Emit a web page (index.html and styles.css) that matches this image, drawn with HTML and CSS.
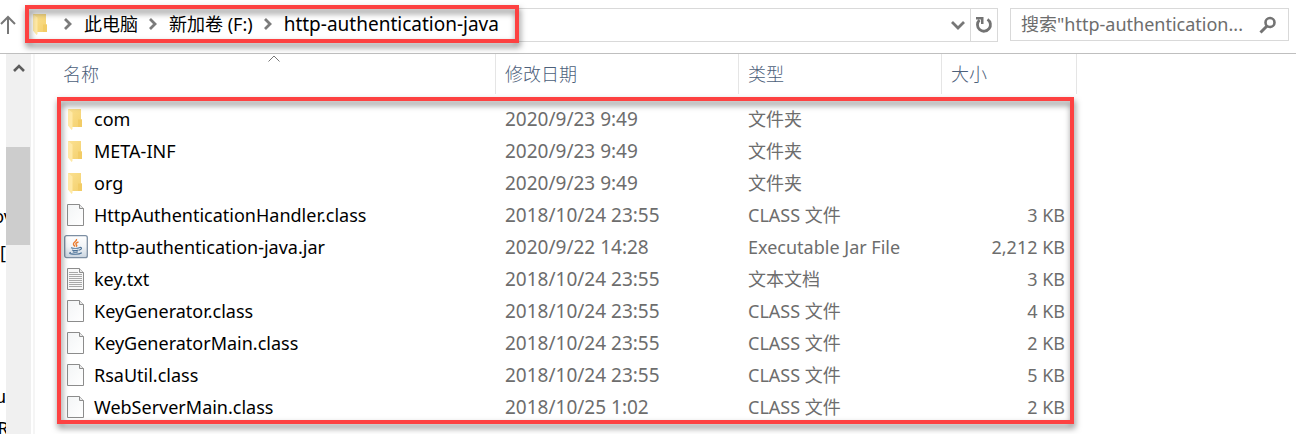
FILE: index.html
```html
<!DOCTYPE html>
<html lang="zh-CN">
<head>
    <meta charset="UTF-8">
    <meta name="viewport" content="width=device-width, initial-scale=1.0">
    <title>http-authentication-java</title>
    <link rel="stylesheet" href="styles.css">
</head>
<body>
    <!-- Shared icons -->
    <svg class="icon-defs" aria-hidden="true">
        <defs>
            <linearGradient id="folder-fill" x1="0" y1="0" x2="1" y2="1">
                <stop offset="0" stop-color="#fbe192"/>
                <stop offset="1" stop-color="#f4d06c"/>
            </linearGradient>
            <linearGradient id="paper-fill" x1="0" y1="0" x2="1" y2="1">
                <stop offset="0" stop-color="#f3f5f6"/>
                <stop offset="1" stop-color="#ffffff"/>
            </linearGradient>
            <linearGradient id="jar-fill" x1="0" y1="0" x2="0" y2="1">
                <stop offset="0" stop-color="#ffffff"/>
                <stop offset="0.5" stop-color="#f1f4f7"/>
                <stop offset="1" stop-color="#c9d4df"/>
            </linearGradient>
            <symbol id="icon-folder" viewBox="0 0 24 24">
                <path d="M4 2h13v10.500h1V20H5z" fill="url(#folder-fill)"/>
                <path d="M14 12.500h4V20h-4z" fill="#f2cc66"/>
                <path d="M4 2l4.500 3.500V22L7.500 23 4 18.500z" fill="#ffe9a6"/>
            </symbol>
            <symbol id="icon-file" viewBox="0 0 24 24">
                <path d="M3.500 1.500h12l4 4v17h-16z" fill="url(#paper-fill)" stroke="#8c8c8c"/>
                <path d="M15.500 1.500v4h4" fill="#e8e8e8" stroke="#8c8c8c"/>
            </symbol>
            <symbol id="icon-text" viewBox="0 0 24 24">
                <path d="M3.500 1.500h12l4 4v17h-16z" fill="#f8f8f8" stroke="#8c8c8c"/>
                <path d="M15.500 1.500v4h4" fill="#e8e8e8" stroke="#8c8c8c"/>
                <path d="M5 5.500h9M5 7.500h13M5 9.500h13M5 11.500h13M5 13.500h13M5 15.500h13M5 17.500h13M5 19.500h13" fill="none" stroke="#a8a8a8"/>
            </symbol>
            <symbol id="icon-jar" viewBox="0 0 24 24">
                <rect x="0.700" y="0.700" width="22.600" height="22" rx="2" fill="url(#jar-fill)" stroke="#7d8fa3" stroke-width="1.300"/>
                <path d="M12.500 4c1 2.300-4 3.200-3 5.500.3.800 1 1.300 1.500 2M14.500 6.800c-2.500 1-3.200 1.800-2.200 2.900.7.700.6 1.200-.2 1.900" fill="none" stroke="#ea7a2c" stroke-width="1.400"/>
                <path d="M7 12.700c2 .8 6.500.8 8.500 0M8 14.900c2 .7 4.500.7 6.500 0M8.800 16.800c1.500.6 3.500.6 5 0M15.500 12.500c2.500-.7 3 1.700-.5 2.700M6.800 17.300c-5 1.800 7.500 3 11 .5" fill="none" stroke="#4a7096" stroke-width="1.100"/>
            </symbol>
            <symbol id="icon-crumb" viewBox="0 0 12 12">
                <path d="M3 1l5 5-5 5" fill="none" stroke="#7b7b7b" stroke-width="2.800"/>
            </symbol>
        </defs>
    </svg>

    <div class="toolbar">
        <button class="up-button" aria-label="上移">
            <svg width="16" height="20" viewBox="0 0 16 20"><path d="M8 19V2M1 9l7-7 7 7" fill="none" stroke="#777" stroke-width="2"/></svg>
        </button>
        <div class="address-bar">
            <nav class="breadcrumb">
                <svg class="file-icon"><use href="#icon-folder"/></svg>
                <svg class="crumb-arrow"><use href="#icon-crumb"/></svg>
                <a href="#">此电脑</a>
                <svg class="crumb-arrow"><use href="#icon-crumb"/></svg>
                <a href="#">新加卷 (F:)</a>
                <svg class="crumb-arrow"><use href="#icon-crumb"/></svg>
                <a href="#" class="current">http-authentication-java</a>
            </nav>
            <button class="history-button" aria-label="历史记录">
                <svg width="14" height="10" viewBox="0 0 14 10"><path d="M1 2l6 6 6-6" fill="none" stroke="#777" stroke-width="2.800"/></svg>
            </button>
            <button class="refresh-button" aria-label="刷新">
                <svg width="18" height="18" viewBox="0 0 18 18">
                    <path d="M12.500 3.300a6.500 6.500 0 1 1-8 .7" fill="none" stroke="#737373" stroke-width="2.800"/>
                    <path d="M1 1h7.500v7H6V3.400H1z" fill="#737373"/>
                </svg>
            </button>
            <div class="highlight highlight-path"></div>
        </div>
        <form class="search-box">
            <input type="text" aria-label="搜索" placeholder="搜索&quot;http-authentication...">
            <button type="button" aria-label="开始搜索">
                <svg width="18" height="18" viewBox="0 0 18 18">
                    <circle cx="11" cy="6.500" r="4.500" fill="none" stroke="#737373" stroke-width="2.600"/>
                    <path d="M8 10l-6.500 6.500" stroke="#737373" stroke-width="3"/>
                </svg>
            </button>
        </form>
    </div>

    <div class="content">
        <div class="nav-pane">
            <span class="nav-first">ov</span>
            <span class="nav-second">[</span>
            <span class="nav-third">ul</span>
            <span class="nav-fourth">R</span>
        </div>
        <div class="scrollbar">
            <svg width="12" height="10" viewBox="0 0 12 10"><path d="M1 8l5-5 5 5" fill="none" stroke="#5c5c5c" stroke-width="2.600"/></svg>
            <div class="scroll-thumb"></div>
        </div>
        <main class="file-pane">
            <table class="file-table">
                <colgroup>
                    <col class="col-name">
                    <col class="col-date">
                    <col class="col-type">
                    <col class="col-size">
                </colgroup>
                <thead>
                    <tr>
                        <th>名称<svg class="sort-arrow" width="12" height="7" viewBox="0 0 12 7"><path d="M.5 6.500L6 1l5.500 5.500" fill="none" stroke="#777"/></svg></th>
                        <th>修改日期</th>
                        <th>类型</th>
                        <th>大小</th>
                    </tr>
                </thead>
                <tbody>
                    <tr>
                        <td><div class="file-name"><svg class="file-icon"><use href="#icon-folder"/></svg>com</div></td>
                        <td>2020/9/23 9:49</td>
                        <td>文件夹</td>
                        <td></td>
                    </tr>
                    <tr>
                        <td><div class="file-name"><svg class="file-icon"><use href="#icon-folder"/></svg>META-INF</div></td>
                        <td>2020/9/23 9:49</td>
                        <td>文件夹</td>
                        <td></td>
                    </tr>
                    <tr>
                        <td><div class="file-name"><svg class="file-icon"><use href="#icon-folder"/></svg>org</div></td>
                        <td>2020/9/23 9:49</td>
                        <td>文件夹</td>
                        <td></td>
                    </tr>
                    <tr>
                        <td><div class="file-name"><svg class="file-icon"><use href="#icon-file"/></svg>HttpAuthenticationHandler.class</div></td>
                        <td>2018/10/24 23:55</td>
                        <td>CLASS 文件</td>
                        <td>3 KB</td>
                    </tr>
                    <tr>
                        <td><div class="file-name"><svg class="file-icon"><use href="#icon-jar"/></svg>http-authentication-java.jar</div></td>
                        <td>2020/9/22 14:28</td>
                        <td>Executable Jar File</td>
                        <td>2,212 KB</td>
                    </tr>
                    <tr>
                        <td><div class="file-name"><svg class="file-icon"><use href="#icon-text"/></svg>key.txt</div></td>
                        <td>2018/10/24 23:55</td>
                        <td>文本文档</td>
                        <td>3 KB</td>
                    </tr>
                    <tr>
                        <td><div class="file-name"><svg class="file-icon"><use href="#icon-file"/></svg>KeyGenerator.class</div></td>
                        <td>2018/10/24 23:55</td>
                        <td>CLASS 文件</td>
                        <td>4 KB</td>
                    </tr>
                    <tr>
                        <td><div class="file-name"><svg class="file-icon"><use href="#icon-file"/></svg>KeyGeneratorMain.class</div></td>
                        <td>2018/10/24 23:55</td>
                        <td>CLASS 文件</td>
                        <td>2 KB</td>
                    </tr>
                    <tr>
                        <td><div class="file-name"><svg class="file-icon"><use href="#icon-file"/></svg>RsaUtil.class</div></td>
                        <td>2018/10/24 23:55</td>
                        <td>CLASS 文件</td>
                        <td>5 KB</td>
                    </tr>
                    <tr>
                        <td><div class="file-name"><svg class="file-icon"><use href="#icon-file"/></svg>WebServerMain.class</div></td>
                        <td>2018/10/25 1:02</td>
                        <td>CLASS 文件</td>
                        <td>2 KB</td>
                    </tr>
                </tbody>
            </table>
            <div class="highlight highlight-files"></div>
        </main>
    </div>
</body>
</html>
```

FILE: styles.css
```css
* {
    box-sizing: border-box;
}
body {
    margin: 0;
    background: #fff;
    color: #000;
    font-family: 'Noto Sans', 'Noto Sans CJK SC', sans-serif;
    font-size: 18px;
    line-height: 24px;
}
a {
    color: inherit;
    text-decoration: none;
}
button {
    display: flex;
    align-items: center;
    justify-content: center;
    padding: 0;
    border: none;
    background: none;
    cursor: pointer;
}
svg {
    flex: none;
}
.icon-defs {
    position: absolute;
    width: 0;
    height: 0;
}

/* Toolbar */
.toolbar {
    display: flex;
    align-items: center;
    height: 54px;
    padding: 0 7px 4px 0;
    border-bottom: 1px solid #bfbfbf;
}
.up-button {
    width: 16px;
    margin-right: 9px;
}
.address-bar {
    position: relative;
    display: flex;
    flex: 1;
    height: 34px;
    border: 1px solid #d9d9d9;
}
.breadcrumb {
    display: flex;
    flex: 1;
    align-items: center;
    padding: 0 0 2px 3px;
    white-space: nowrap;
}
.breadcrumb .current {
    font-size: 19px;
}
.file-icon {
    width: 24px;
    height: 24px;
}
.crumb-arrow {
    width: 12px;
    height: 12px;
    margin: 0 10px 0 9px;
}
.history-button {
    width: 24px;
}
.refresh-button {
    width: 27px;
    border-left: 1px solid #d9d9d9;
}
.search-box {
    display: flex;
    width: 279px;
    height: 33px;
    margin-left: 12px;
    border: 1px solid #d9d9d9;
}
.search-box input {
    flex: 1;
    min-width: 0;
    padding: 0 0 2px 10px;
    border: none;
    background: none;
    font: inherit;
}
.search-box input::placeholder {
    color: #6d6d6d;
    opacity: 1;
}
.search-box button {
    width: 40px;
}

/* Red frames */
.highlight {
    position: absolute;
    border: 4px solid #fd4141;
    filter: drop-shadow(1px 4px 3px rgba(0, 0, 0, 0.5));
    pointer-events: none;
}
.highlight-path {
    top: -4px;
    left: -1px;
    width: 494px;
    height: 38px;
}
.highlight-files {
    top: 43px;
    left: 22px;
    width: 1017px;
    height: 327px;
}

/* Content */
.content {
    display: flex;
    height: calc(100vh - 54px);
    overflow: hidden;
}
.nav-pane {
    display: flex;
    flex-direction: column;
    align-items: center;
    width: 6px;
    overflow: hidden;
}
.nav-first {
    margin-top: 150px;
}
.nav-second {
    margin-top: 12px;
}
.nav-third {
    margin-top: 120px;
}
.nav-fourth {
    margin-top: 8px;
}
.scrollbar {
    display: flex;
    flex-direction: column;
    align-items: center;
    width: 25px;
    padding-top: 9px;
    background: #f0f0f0;
}
.scroll-thumb {
    width: 100%;
    height: 98px;
    margin-top: 74px;
    border-right: 1px solid #f0f0f0;
    background: #cdcdcd;
}
.file-pane {
    position: relative;
    flex: 1;
    margin-left: 2px;
    border-left: 2px solid #f5f5f5;
}

/* File table */
.file-table {
    width: 1042px;
    table-layout: fixed;
    border-collapse: separate;
    border-spacing: 0;
}
.col-name {
    width: 461px;
}
.col-date {
    width: 243px;
}
.col-type {
    width: 203px;
}
.file-table th {
    position: relative;
    height: 40px;
    padding: 0 0 0 9px;
    border-right: 1px solid #e5e5e5;
    color: #4c607a;
    font-weight: 300;
    text-align: left;
}
.file-table th:first-child {
    padding-left: 28px;
}
.sort-arrow {
    position: absolute;
    top: 1px;
    left: 233px;
}
.file-table tbody::before {
    display: block;
    height: 9px;
    content: "";
}
.file-table td {
    height: 32px;
    padding: 0 0 0 9px;
    color: #6d6d6d;
    white-space: nowrap;
}
.file-table td:first-child {
    padding-left: 29px;
    color: #000;
}
.file-table td:nth-child(2) {
    font-size: 19px;
}
.file-table td:last-child {
    padding-right: 12px;
    text-align: right;
}
.file-name {
    display: flex;
    align-items: center;
    gap: 6px;
}
```
